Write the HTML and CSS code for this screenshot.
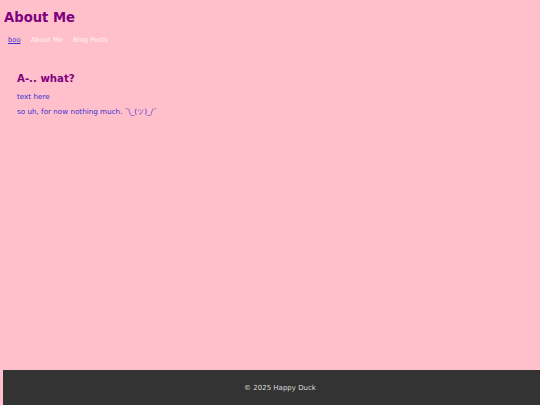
FILE: index.html
```html
<!DOCTYPE html>
<html lang="en">
<head>
<meta charset="utf-8">
<title>About Me</title>
<link rel="stylesheet" href="styles.css">
</head>
<body>
<div class="page">
  <header class="site-header">
    <h1 class="site-title">About Me</h1>
    <nav class="nav">
      <a class="nav-link nav-current" href="#">boo</a>
      <a class="nav-link" href="#">About Me</a>
      <a class="nav-link" href="#">Blog Posts</a>
    </nav>
  </header>
  <main class="content">
    <h2 class="section-title">A-.. what?</h2>
    <p class="text">text here</p>
    <p class="text">so uh, for now nothing much. ¯\_(ツ)_/¯</p>
  </main>
  <footer class="site-footer">© 2025 Happy Duck</footer>
</div>
</body>
</html>
```
FILE: styles.css
```css
html, body {
  margin: 0;
  padding: 0;
  height: 100%;
}
body {
  background: #ffc0cb;
  font-family: "DejaVu Sans", Verdana, sans-serif;
}
.page {
  min-height: 100%;
  display: flex;
  flex-direction: column;
}
.site-header {
  padding: 10px 4px 0 4px;
}
.site-title {
  margin: 0;
  font-size: 13.2px;
  line-height: 16px;
  color: #800080;
  font-weight: bold;
}
.nav {
  display: flex;
  gap: 10px;
  margin-top: 10px;
  padding-left: 4px;
}
.nav-link {
  font-size: 6.8px;
  line-height: 9px;
  color: #fff0f5;
  text-decoration: none;
}
.nav-current {
  color: #3a2fd0;
  text-decoration: underline;
  text-decoration-color: #3a2fd0;
}
.content {
  flex: 1;
  padding: 27px 17px 0 17px;
}
.section-title {
  margin: 0 0 6px 0;
  font-size: 10.2px;
  line-height: 14px;
  color: #800080;
}
.text {
  margin: 0 0 6px 0;
  font-size: 7.2px;
  line-height: 9px;
  color: #3a2fd0;
}
.site-footer {
  margin-left: 3px;
  height: 35px;
  display: flex;
  align-items: center;
  justify-content: center;
  padding-left: 17px;
  background: #333333;
  color: #dddddd;
  font-size: 7px;
}
```
